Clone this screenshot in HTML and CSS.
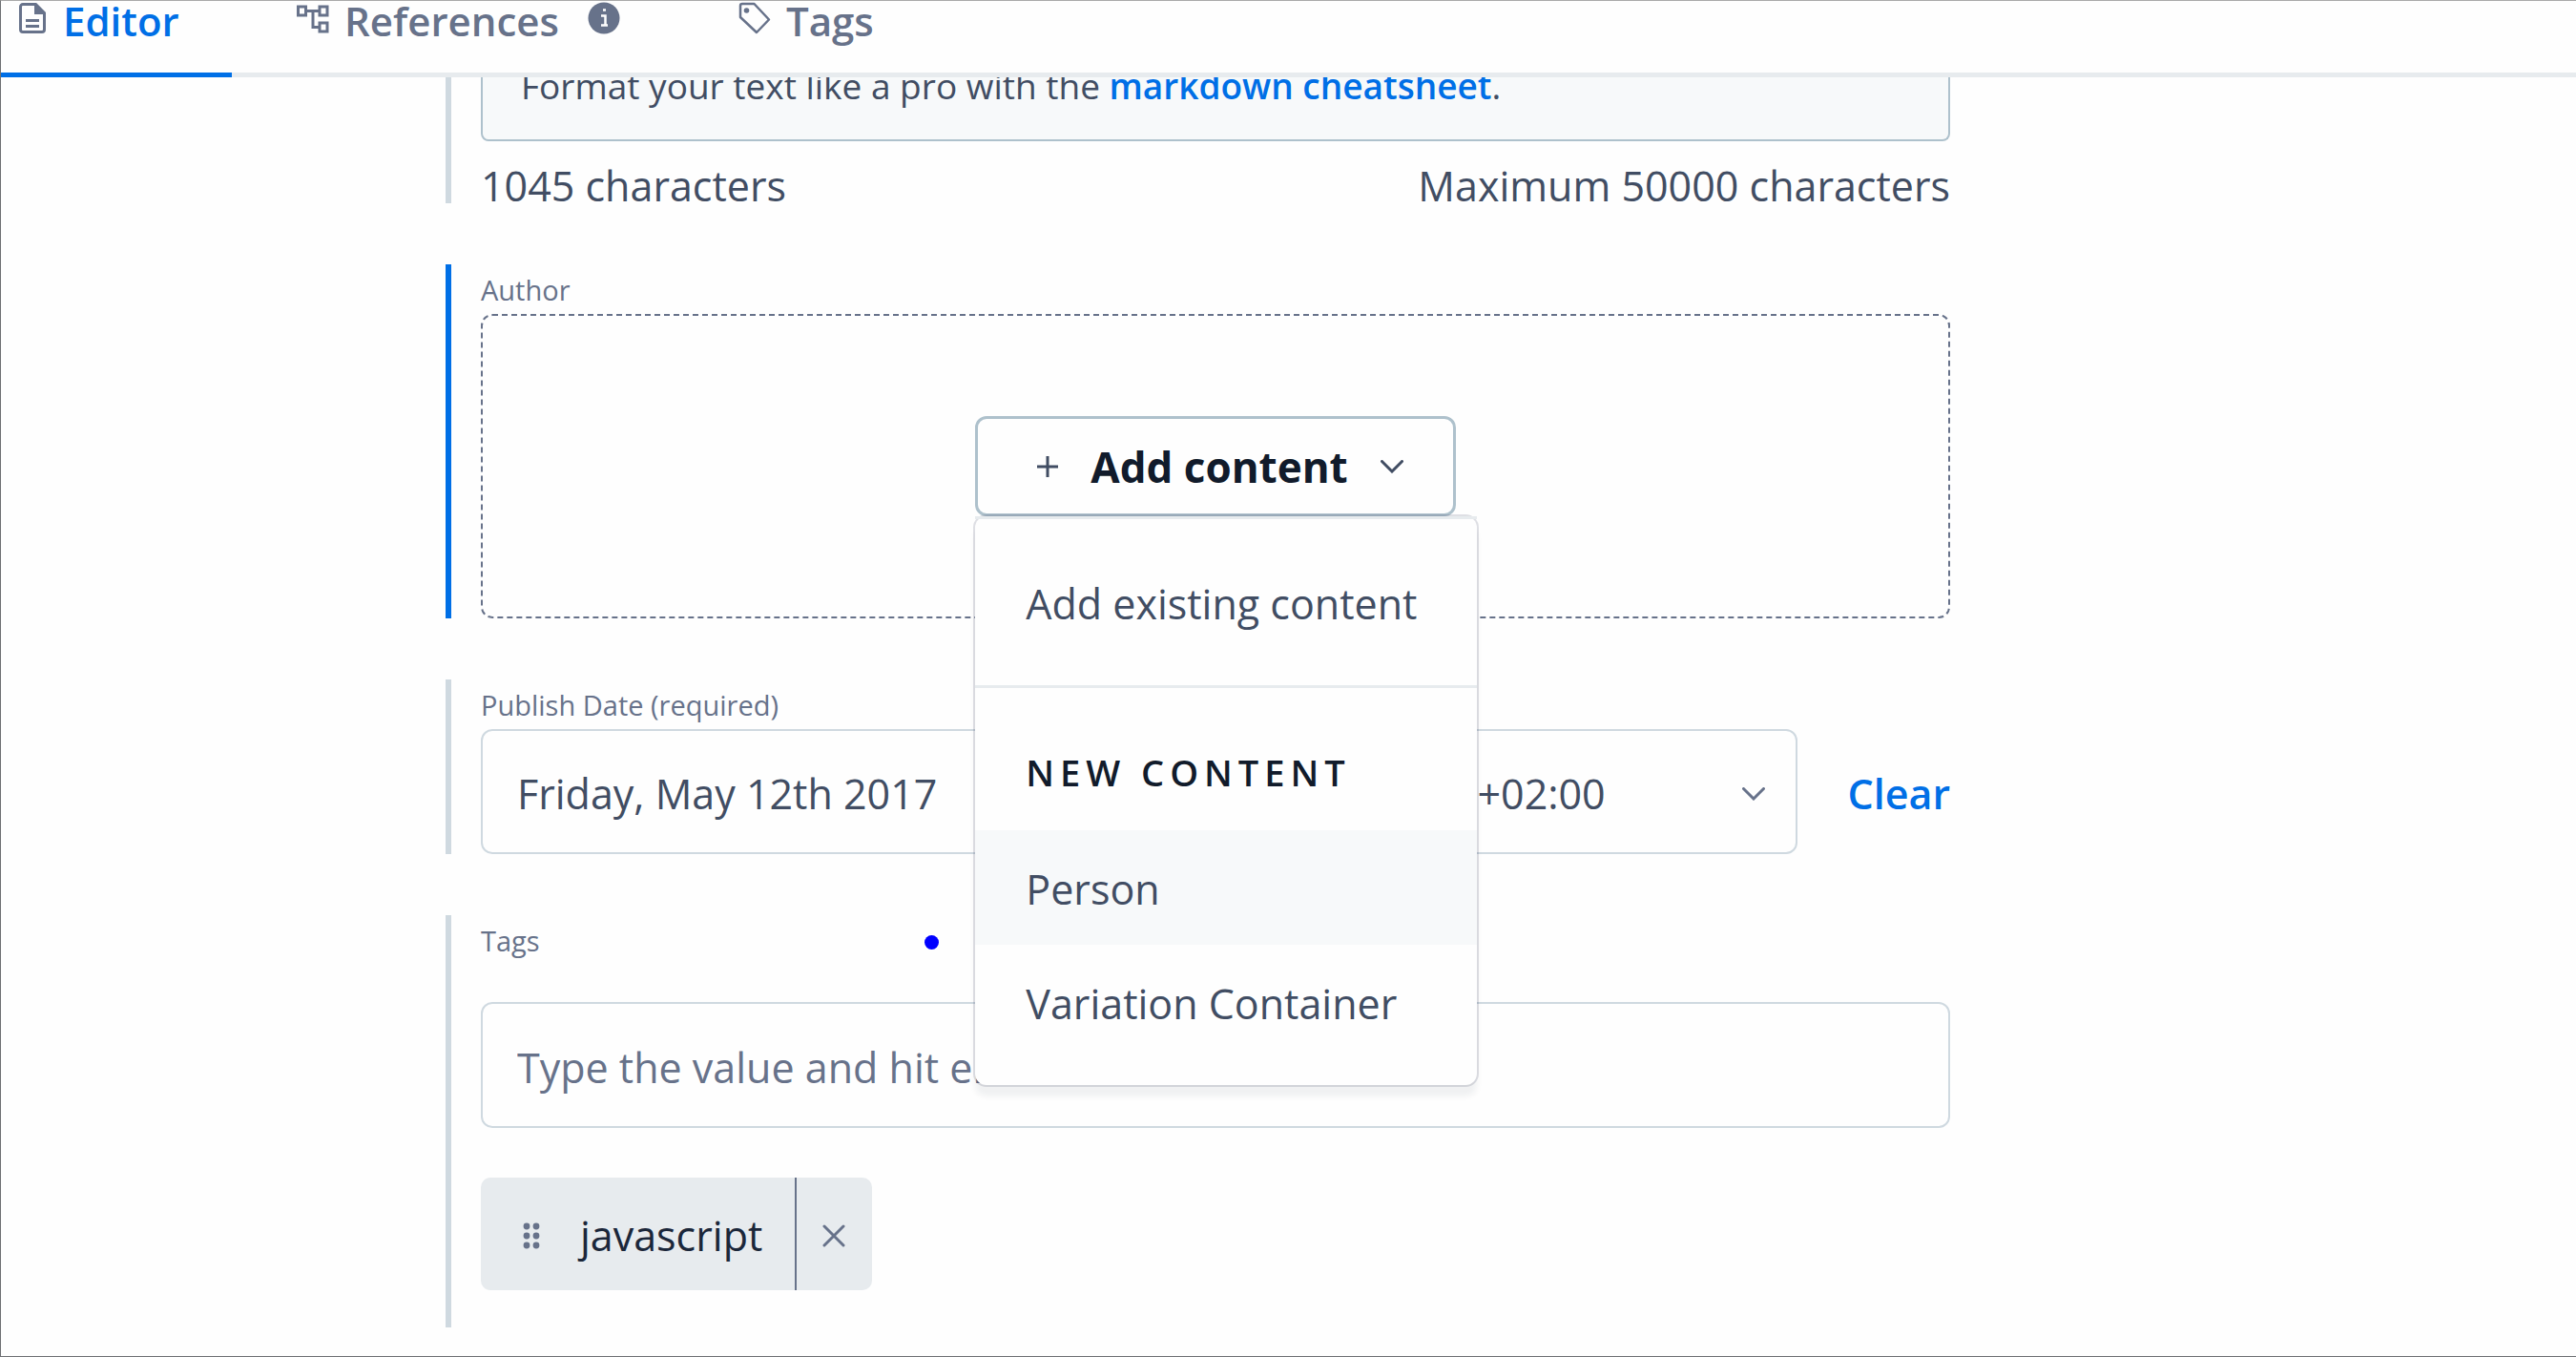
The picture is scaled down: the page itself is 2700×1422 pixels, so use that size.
FILE: index.html
```html
<!DOCTYPE html>
<html lang="en">
<head>
<meta charset="utf-8">
<title>Entry editor</title>
<link rel="stylesheet" href="styles.css">
</head>
<body>
<div class="page">
  <nav class="tabs">
    <a class="tab tab-active" href="#editor">
      <svg class="icon-doc" viewBox="0 0 28 32" aria-hidden="true"><path d="M4 1.500h13.500l9 9V28a2.500 2.500 0 0 1-2.500 2.500H4A2.500 2.500 0 0 1 1.500 28V4A2.500 2.500 0 0 1 4 1.500zM7 18.500h14M7 24.500h14" fill="none" stroke="currentColor" stroke-width="3"/><path d="M16 1v11h11z" fill="currentColor"/></svg>
      Editor
    </a>
    <a class="tab" href="#references">
      <svg class="icon-refs" viewBox="0 0 34 30" aria-hidden="true"><path d="M1.500 2h8v9h-8zM24 2h8v9h-8zM24 19h8v9h-8zM9.500 6.500H24M17 6.500v17h7" fill="none" stroke="currentColor" stroke-width="3"/></svg>
      References
      <svg class="icon-info" viewBox="0 0 34 34" aria-hidden="true"><circle cx="17" cy="17" r="16.500" fill="currentColor"/><path d="M14 14.500h4.500v9M14 24.500h7M16 8.500h3" fill="none" stroke="#fefefe" stroke-width="2.500"/></svg>
    </a>
    <a class="tab" href="#tags">
      <svg class="icon-tag" viewBox="0 0 34 34" aria-hidden="true"><path d="M2 4a2 2 0 0 1 2-2h12.500L32 18.500 19 32 2 16z" fill="none" stroke="currentColor" stroke-width="2.500" stroke-linejoin="round"/><circle cx="8.500" cy="9" r="2.800" fill="currentColor"/></svg>
      Tags
    </a>
  </nav>

  <main class="form">
    <section class="field">
      <div class="hint">Format your text like a pro with the <a class="hint-link" href="#cheatsheet">markdown cheatsheet</a>.</div>
      <div class="counts"><span>1045 characters</span><span>Maximum 50000 characters</span></div>
    </section>

    <section class="field field-active">
      <h2 class="label">Author</h2>
      <div class="dropzone">
        <div class="dropdown">
          <button class="add-button" type="button" aria-expanded="true">
            <svg class="icon-plus" viewBox="0 0 22 22" aria-hidden="true"><path d="M11 0v22M0 11h22" stroke="currentColor" stroke-width="3"/></svg>
            Add content
            <svg class="icon-chevron" viewBox="0 0 24 14" aria-hidden="true"><path d="M1.500 1.500 12 12 22.500 1.500" fill="none" stroke="currentColor" stroke-width="3" stroke-linecap="round"/></svg>
          </button>
          <div class="menu">
            <div class="menu-group">
              <button class="menu-item" type="button">Add existing content</button>
            </div>
            <div class="menu-group">
              <h3 class="menu-title">NEW CONTENT</h3>
              <button class="menu-item menu-item-hover" type="button">Person</button>
              <button class="menu-item" type="button">Variation Container</button>
            </div>
          </div>
        </div>
      </div>
    </section>

    <section class="field">
      <label class="label" for="date">Publish Date (required)</label>
      <div class="date-row">
        <input class="input date-input" id="date" type="text" value="Friday, May 12th 2017">
        <div class="zone">
          <select class="input zone-select" aria-label="Time zone"><option>+02:00</option></select>
          <svg class="icon-chevron zone-chevron" viewBox="0 0 24 14" aria-hidden="true"><path d="M1.500 1.500 12 12 22.500 1.500" fill="none" stroke="currentColor" stroke-width="3" stroke-linecap="round"/></svg>
        </div>
        <button class="clear" type="button">Clear</button>
      </div>
    </section>

    <section class="field tags-field">
      <label class="label" for="tags">Tags</label>
      <span class="pointer-dot"></span>
      <input class="input tags-input" id="tags" type="text" placeholder="Type the value and hit enter">
      <div class="chip">
        <span class="chip-body">
          <svg class="icon-drag" viewBox="0 0 18 28" aria-hidden="true"><g fill="currentColor"><circle cx="4" cy="4" r="3.400"/><circle cx="14" cy="4" r="3.400"/><circle cx="4" cy="14" r="3.400"/><circle cx="14" cy="14" r="3.400"/><circle cx="4" cy="24" r="3.400"/><circle cx="14" cy="24" r="3.400"/></g></svg>
          javascript
        </span>
        <button class="chip-remove" type="button" aria-label="Remove javascript">
          <svg class="icon-close" viewBox="0 0 24 24" aria-hidden="true"><path d="M2 2l20 20M22 2 2 22" stroke="currentColor" stroke-width="3" stroke-linecap="round"/></svg>
        </button>
      </div>
    </section>
  </main>
</div>
</body>
</html>
```
FILE: styles.css
```css
* {
  box-sizing: border-box;
}

body {
  margin: 0;
  background: #fefefe;
  color: #414d63;
  font: 43px/60px "Open Sans", "Noto Sans", sans-serif;
}

.page {
  min-height: 100vh;
  border: 1px solid #6e7073;
  border-top-color: #a9a9a9;
  border-right: 0;
}

button,
input,
select {
  margin: 0;
  color: inherit;
  font: inherit;
}

svg {
  display: block;
  flex: none;
}

/* Tabs */
.tabs {
  position: relative;
  z-index: 1;
  display: flex;
  gap: 68px;
  height: 80px;
  background: #fefefe;
  box-shadow: inset 0 -5px #e7ebee;
}

.tab {
  display: flex;
  align-items: flex-start;
  height: 80px;
  color: #67728a;
  font-size: 42px;
  font-weight: 600;
  line-height: 42px;
  text-decoration: none;
}

.tab-active {
  width: 242px;
  padding-left: 19px;
  border-bottom: 5px solid #006fe6;
  color: #006fe6;
}

.icon-doc {
  width: 28px;
  height: 32px;
  margin: 2px 18px 0 0;
  color: #67728a;
}

.icon-refs {
  width: 34px;
  height: 30px;
  margin: 4px 16px 0 0;
}

.icon-info {
  width: 34px;
  height: 34px;
  margin: 1px 56px 0 30px;
}

.icon-tag {
  width: 34px;
  height: 34px;
  margin: 1px 16px 0 0;
}

/* Form */
.form {
  display: flex;
  flex-direction: column;
  gap: 64px;
  margin-top: -20px;
  padding: 0 656px 30px 466px;
}

.field {
  padding-left: 31px;
  border-left: 6px solid #cfd9e0;
}

.field-active {
  border-left-color: #006fe6;
}

.label {
  display: block;
  margin: 0;
  padding-top: 2px;
  color: #67728a;
  font-size: 29px;
  font-weight: 400;
  line-height: 50px;
}

.hint {
  padding: 0 40px 27px;
  border: 2px solid #aec1cc;
  border-top: 0;
  border-radius: 0 0 8px 8px;
  background: #f7f9fa;
  font-size: 37px;
  line-height: 58px;
}

.hint-link {
  color: #006fe6;
  font-weight: 600;
  text-decoration: none;
}

.counts {
  display: flex;
  justify-content: space-between;
  margin-top: 29px;
  line-height: 36px;
}

.dropzone {
  display: flex;
  justify-content: center;
  padding: 105px 0;
  border: 2px dashed #67728a;
  border-radius: 12px;
}

.dropdown {
  position: relative;
}

.add-button {
  display: flex;
  align-items: center;
  gap: 34px;
  height: 105px;
  padding: 0 52px 0 62px;
  border: 3px solid #aec1cc;
  border-radius: 12px;
  background: #fefefe;
  color: #111b2b;
  font-size: 44px;
  font-weight: 700;
}

.icon-plus {
  width: 22px;
  height: 22px;
  color: #414d63;
}

.icon-chevron {
  width: 24px;
  height: 14px;
  color: #414d63;
}

.menu {
  position: absolute;
  top: 100%;
  left: 0;
  z-index: 1;
  width: 526px;
  border-radius: 12px;
  background: #fefefe;
  box-shadow: 0 0 0 2px rgba(25, 37, 70, 0.14), 0 12px 6px rgba(25, 37, 50, 0.06);
}

.menu-group {
  padding: 27px 0;
  border-top: 3px solid #e7ebee;
}

.menu-item {
  display: block;
  width: 100%;
  height: 120px;
  padding: 4px 53px 0;
  border: 0;
  background: none;
  text-align: left;
  white-space: nowrap;
}

.menu-item-hover {
  background: #f7f9fa;
}

.menu-title {
  margin: 0;
  padding: 0 53px;
  color: #111b2b;
  font-size: 38px;
  font-weight: 600;
  letter-spacing: 6px;
  line-height: 122px;
}

.input {
  display: block;
  width: 100%;
  height: 131px;
  padding: 4px 36px 0;
  border: 2px solid #cfd9e0;
  border-radius: 12px;
  background: #fefefe;
}

.input::placeholder {
  color: #67728a;
  opacity: 1;
}

.date-row {
  display: flex;
  align-items: center;
}

.date-input {
  flex: 1;
  min-width: 0;
  margin-right: 20px;
}

.zone {
  position: relative;
  width: 374px;
  margin-right: 52px;
}

.zone-select {
  appearance: none;
}

.zone-chevron {
  position: absolute;
  top: 61px;
  right: 34px;
  color: #67728a;
  pointer-events: none;
}

.clear {
  padding: 4px 0 0;
  border: 0;
  background: none;
  color: #006fe6;
  font-weight: 600;
}

.tags-field {
  position: relative;
  padding-bottom: 39px;
}

.tags-input {
  height: 132px;
  margin: 39px 0 52px;
}

.pointer-dot {
  position: absolute;
  top: 21px;
  left: 496px;
  width: 15px;
  height: 15px;
  border-radius: 50%;
  background: #0000ff;
}

.chip {
  display: inline-flex;
  height: 118px;
  border-radius: 10px;
  background: #e7ebee;
  vertical-align: top;
}

.chip-body {
  display: flex;
  align-items: center;
  gap: 42px;
  padding: 4px 34px 0 44px;
  color: #1b273a;
}

.icon-drag {
  width: 18px;
  height: 28px;
  color: #67728a;
}

.chip-remove {
  width: 81px;
  padding: 4px 0 0 27px;
  border: 0;
  border-left: 2px solid #67728a;
  background: none;
}

.icon-close {
  width: 24px;
  height: 24px;
  color: #67728a;
}
```
